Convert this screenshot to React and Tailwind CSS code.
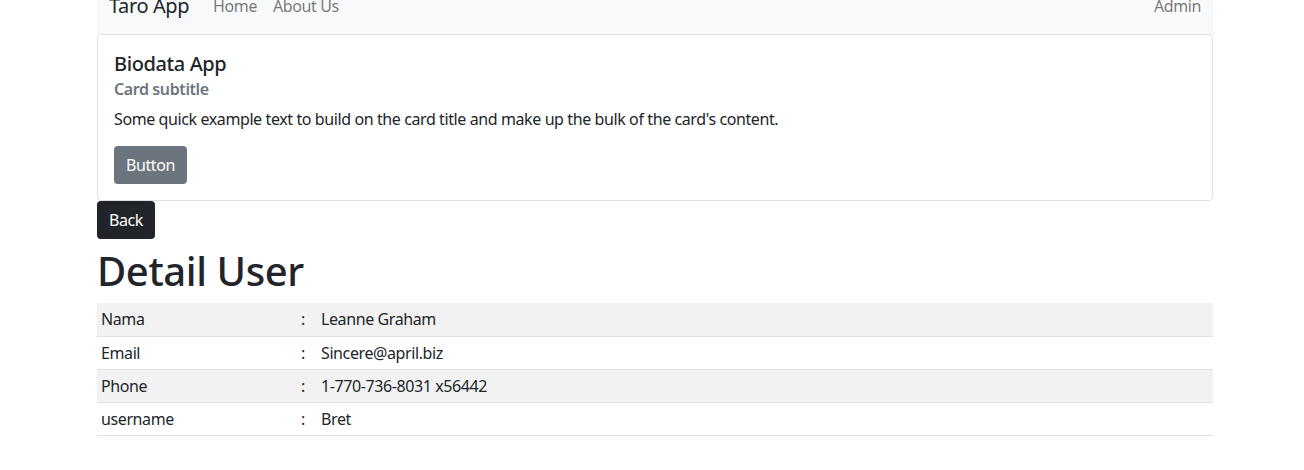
const user = [
  ['Nama', 'Leanne Graham'],
  ['Email', 'Sincere@april.biz'],
  ['Phone', '1-770-736-8031 x56442'],
  ['username', 'Bret'],
]

const App = () => {
  return (
    <div className="min-h-[470px] bg-white text-[#212529] font-['Noto_Sans',sans-serif] text-[16px] tracking-[-0.025em] overflow-hidden">
      <div className="ml-[97px] w-[1116px]">
        {/* Navbar */}
        <nav className="mt-[-22px] h-[56px] bg-[#f8f9fa] flex items-center px-3">
          <span className="text-[20px] leading-none mr-4 text-[#212529]">Taro App</span>
          <a className="px-2 text-[rgba(0,0,0,0.55)]">Home</a>
          <a className="px-2 text-[rgba(0,0,0,0.55)]">About Us</a>
          <a className="ml-auto text-[rgba(0,0,0,0.55)]">Admin</a>
        </nav>

        {/* Card */}
        <div className="border border-[#dfdfdf] rounded-[4px] p-4">
          <h5 className="text-[20px] font-medium leading-[1.2] mb-2 mt-[1px]">Biodata App</h5>
          <h6 className="text-[16px] font-semibold leading-[1.2] text-[#6c757d] mt-[-4px] mb-2">Card subtitle</h6>
          <p className="leading-[1.5] mb-[15px]">
            Some quick example text to build on the card title and make up the bulk of the card's content.
          </p>
          <button className="bg-[#6c757d] text-white rounded-[4px] px-3 h-[38px]">Button</button>
        </div>

        <button className="bg-[#212529] text-white rounded-[4px] px-3 h-[38px]">Back</button>

        <h1 className="text-[40px] font-medium leading-[1.2] mt-[8px] mb-[8px]">Detail User</h1>

        <table className="w-full border-collapse">
          <tbody>
            {user.map(([label, value], i) => (
              <tr key={label} className={i % 2 === 0 ? 'bg-[#f2f2f2]' : ''}>
                <td className="w-[200px] px-1 h-[33px] border-b border-[#dee2e6]">{label}</td>
                <td className="w-[20px] px-1 border-b border-[#dee2e6]">:</td>
                <td className="px-1 border-b border-[#dee2e6]">{value}</td>
              </tr>
            ))}
          </tbody>
        </table>
      </div>
    </div>
  )
}

export default App
